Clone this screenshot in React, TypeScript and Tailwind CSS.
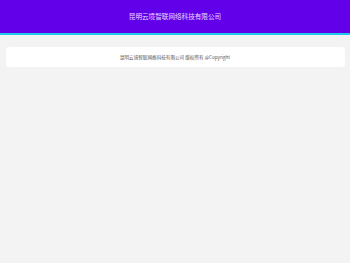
import React from 'react'

const font = { fontFamily: '"Noto Sans CJK SC", "Noto Sans", sans-serif' }

function App() {
  return (
    <div className="min-h-screen w-full bg-[#f3f3f3]" style={font}>
      <header className="h-[35px] bg-[#6200ea] border-b-2 border-[#1ec8e8] flex items-center justify-center">
        <h1 className="text-[6.6px] leading-none text-[#e8dcff]">昆明云境智联网络科技有限公司</h1>
      </header>
      <div className="px-[5.5px] pt-[12px]">
        <footer className="h-[20px] bg-white rounded-[3px] flex items-center justify-center">
          <p className="text-[4.6px] leading-none text-[#555]">昆明云境智联网络科技有限公司 版权所有 @Copyright</p>
        </footer>
      </div>
    </div>
  )
}

export default App
